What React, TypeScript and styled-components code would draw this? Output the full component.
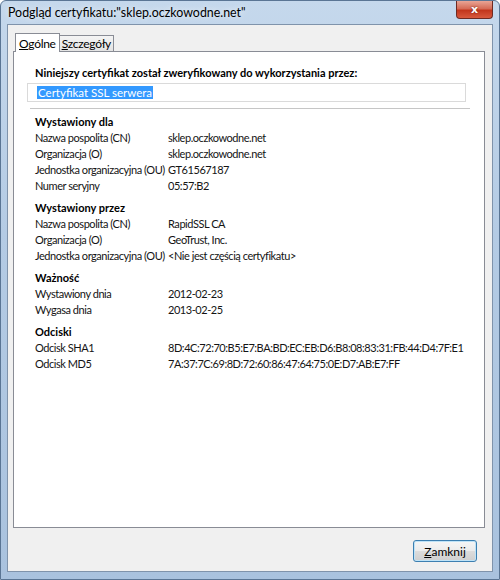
import styled, { createGlobalStyle } from "styled-components";

const Global = createGlobalStyle`
  html, body { margin: 0; padding: 0; }
  body {
    width: 500px;
    height: 580px;
    overflow: hidden;
    font-family: Lato, "Noto Sans", sans-serif;
    font-size: 11px;
    color: #1a1a1a;
  }
`;

const Window = styled.div`
  width: 500px;
  height: 580px;
  box-sizing: border-box;
  display: flex;
  flex-direction: column;
  border-radius: 6px 6px 0 0;
  background: linear-gradient(180deg, #c5d8ec 0%, #b4cbe4 40%, #a9c2de 100%);
  border: 1px solid #5a7594;
`;

const TitleBar = styled.div`
  height: 23px;
  display: flex;
  align-items: flex-start;
  justify-content: space-between;
  padding-left: 7px;
`;

const TitleText = styled.span`
  margin-top: 4px;
  font-size: 12.4px;
  color: #000;
  text-shadow: 0 0 6px rgba(255, 255, 255, 0.9);
`;

const CloseButton = styled.div`
  width: 35px;
  height: 17px;
  margin-right: 6px;
  border: 1px solid #6e2a22;
  border-top: none;
  border-radius: 0 0 4px 4px;
  background: linear-gradient(180deg, #e9a595 0%, #d56b56 45%, #c2361c 55%, #d8593d 100%);
  display: flex;
  align-items: center;
  justify-content: center;
  color: #fff;
  font-family: "DejaVu Sans", sans-serif;
  font-weight: bold;
  font-size: 11px;
  text-shadow: 0 0 2px #6a1a10;
`;

const Client = styled.div`
  flex: 1;
  margin: 0 6px 7px 6px;
  background: #f0f0f0;
  border: 1px solid #7f93ab;
  display: flex;
  flex-direction: column;
  padding: 6px 7px 0 5px;
`;

const TabStrip = styled.div`
  display: flex;
  align-items: flex-end;
  height: 20px;
  padding-left: 2px;
`;

const Tab = styled.div<{ $active?: boolean }>`
  height: ${({ $active }) => ($active ? "18px" : "15px")};
  padding: 0 ${({ $active }) => ($active ? "3px" : "2px")};
  display: flex;
  align-items: center;
  background: ${({ $active }) => ($active ? "#fff" : "linear-gradient(180deg, #f4f4f4, #e3e3e3)")};
  border: 1px solid #898c95;
  border-bottom: none;
  margin-right: ${({ $active }) => ($active ? "-1px" : "0")};
  position: relative;
  z-index: ${({ $active }) => ($active ? 1 : 0)};
  margin-bottom: ${({ $active }) => ($active ? "-1px" : "0")};
  font-size: 12px;
  letter-spacing: -0.3px;
  color: #000;

  u { text-decoration: underline; }
`;

const Panel = styled.div`
  height: 477px;
  background: #fff;
  border: 1px solid #898c95;
  padding: 13px 18px 0 13px;
  box-sizing: border-box;
`;

const Heading = styled.div<{ $inset?: boolean }>`
  font-weight: bold;
  font-size: 11px;
  line-height: 16px;
  padding-left: ${({ $inset }) => ($inset ? "8px" : "0")};
  color: #000;
`;

const PurposeBox = styled.div`
  margin-top: 2px;
  height: 16px;
  border: 1px solid #dadada;
  padding: 1px 0 0 9px;
  line-height: 15px;
`;

const Selected = styled.span`
  background: #3399ff;
  color: #fff;
  padding: 0 1px;
  font-size: 11.5px;
`;

const Separator = styled.div`
  margin: 6px 0 5px 3px;
  border-top: 1px solid #c6c6c6;
  width: 440px;
`;

const Section = styled.div`
  padding-left: 8px;
  margin-bottom: 6px;
`;

const Row = styled.div`
  display: grid;
  grid-template-columns: 133px 1fr;
  line-height: 16px;
  font-size: 11px;
  letter-spacing: -0.45px;
  white-space: nowrap;
  color: #141414;
`;

const Footer = styled.div`
  display: flex;
  justify-content: flex-end;
  padding: 12px 8px 0 0;
`;

const Button = styled.div`
  width: 62px;
  height: 20px;
  border: 1px solid #3c7fb1;
  border-radius: 3px;
  box-shadow: inset 0 0 0 1px #bfe3f7;
  background: linear-gradient(180deg, #f6f6f6 0%, #ececec 48%, #dcdcdc 52%, #cfcfcf 100%);
  display: flex;
  align-items: center;
  justify-content: center;
  font-size: 12px;
  color: #000;

  u { text-decoration: underline; }
`;

type Field = [string, string];

const sections: { title: string; rows: Field[] }[] = [
  {
    title: "Wystawiony dla",
    rows: [
      ["Nazwa pospolita (CN)", "sklep.oczkowodne.net"],
      ["Organizacja (O)", "sklep.oczkowodne.net"],
      ["Jednostka organizacyjna (OU)", "GT61567187"],
      ["Numer seryjny", "05:57:B2"],
    ],
  },
  {
    title: "Wystawiony przez",
    rows: [
      ["Nazwa pospolita (CN)", "RapidSSL CA"],
      ["Organizacja (O)", "GeoTrust, Inc."],
      ["Jednostka organizacyjna (OU)", "<Nie jest częścią certyfikatu>"],
    ],
  },
  {
    title: "Ważność",
    rows: [
      ["Wystawiony dnia", "2012-02-23"],
      ["Wygasa dnia", "2013-02-25"],
    ],
  },
  {
    title: "Odciski",
    rows: [
      ["Odcisk SHA1", "8D:4C:72:70:B5:E7:BA:BD:EC:EB:D6:B8:08:83:31:FB:44:D4:7F:E1"],
      ["Odcisk MD5", "7A:37:7C:69:8D:72:60:86:47:64:75:0E:D7:AB:E7:FF"],
    ],
  },
];

export default function App() {
  return (
    <>
      <Global />
      <Window>
        <TitleBar>
          <TitleText>Podgląd certyfikatu:"sklep.oczkowodne.net"</TitleText>
          <CloseButton>x</CloseButton>
        </TitleBar>
        <Client>
          <TabStrip>
            <Tab $active>
              <u>O</u>gólne
            </Tab>
            <Tab>
              <u>S</u>zczegóły
            </Tab>
          </TabStrip>
          <Panel>
            <Heading $inset>Niniejszy certyfikat został zweryfikowany do wykorzystania przez:</Heading>
            <PurposeBox>
              <Selected>Certyfikat SSL serwera</Selected>
            </PurposeBox>
            <Separator />
            {sections.map((s) => (
              <Section key={s.title}>
                <Heading>{s.title}</Heading>
                {s.rows.map(([label, value]) => (
                  <Row key={label + value}>
                    <span>{label}</span>
                    <span>{value}</span>
                  </Row>
                ))}
              </Section>
            ))}
          </Panel>
          <Footer>
            <Button>
              <u>Z</u>amknij
            </Button>
          </Footer>
        </Client>
      </Window>
    </>
  );
}
